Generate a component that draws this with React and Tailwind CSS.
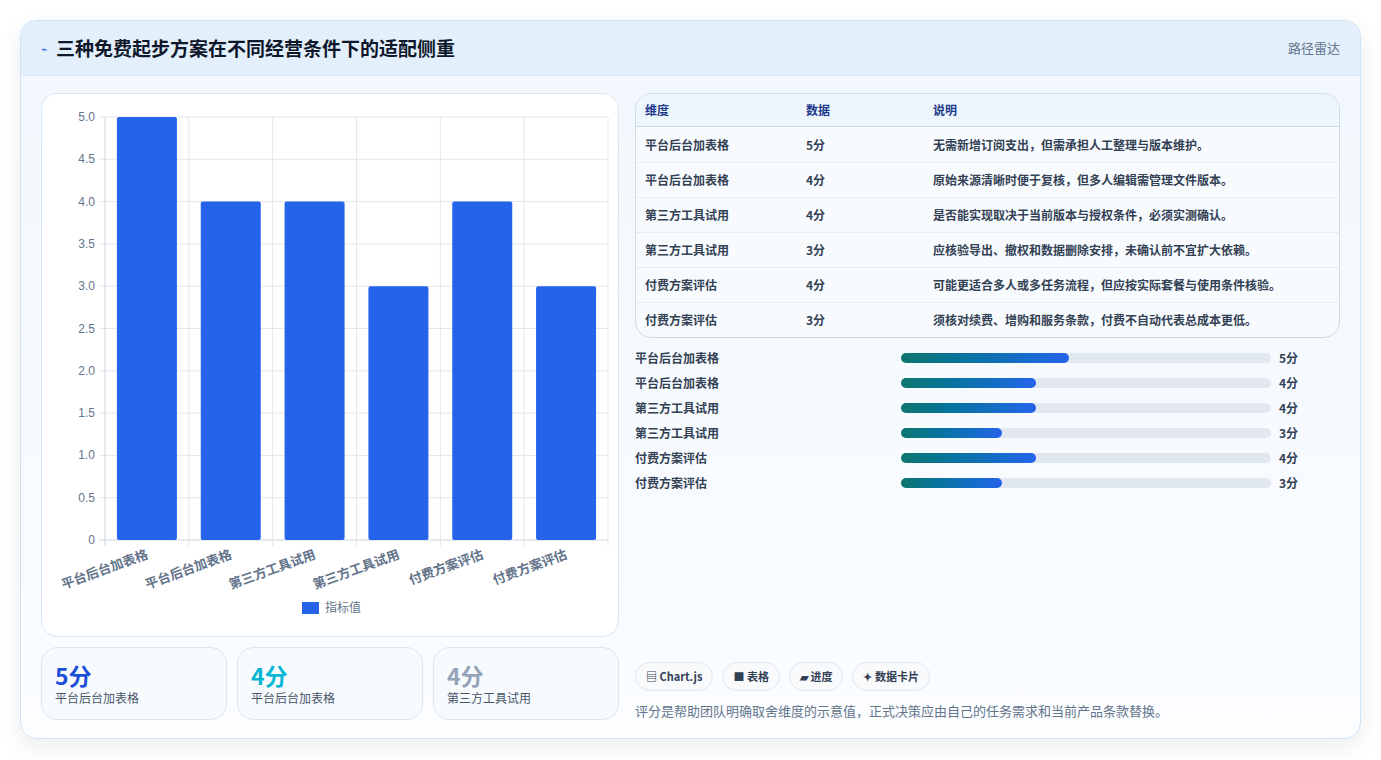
import React from "react";

const rows = [
  ["平台后台加表格", 5, "无需新增订阅支出，但需承担人工整理与版本维护。"],
  ["平台后台加表格", 4, "原始来源清晰时便于复核，但多人编辑需管理文件版本。"],
  ["第三方工具试用", 4, "是否能实现取决于当前版本与授权条件，必须实测确认。"],
  ["第三方工具试用", 3, "应核验导出、撤权和数据删除安排，未确认前不宜扩大依赖。"],
  ["付费方案评估", 4, "可能更适合多人或多任务流程，但应按实际套餐与使用条件核验。"],
  ["付费方案评估", 3, "须核对续费、增购和服务条款，付费不自动代表总成本更低。"],
];

function Chart() {
  const x0 = 63, x1 = 566, y0 = 23, y1 = 446;
  const cw = (x1 - x0) / 6;
  const yv = (v) => y1 - (v / 5) * (y1 - y0);
  const ticks = [0, 0.5, 1, 1.5, 2, 2.5, 3, 3.5, 4, 4.5, 5];
  return (
    <svg width="578" height="541" className="block" style={{ fontFamily: "'Liberation Sans','Noto Sans CJK SC',sans-serif" }}>
      {ticks.map((t) => (
        <g key={t}>
          <line x1={x0 - 6} x2={x1} y1={yv(t)} y2={yv(t)} stroke={t === 0 ? "#cbd5e1" : "#e5e7eb"} />
          <text x={x0 - 10} y={yv(t) + 4} textAnchor="end" fontSize="12" fill="#64748b">{t === 0 ? "0" : t.toFixed(1)}</text>
        </g>
      ))}
      {Array.from({ length: 7 }).map((_, i) => (
        <line key={i} x1={x0 + i * cw} x2={x0 + i * cw} y1={y0} y2={y1 + 6} stroke={i === 0 ? "#cbd5e1" : "#e5e7eb"} />
      ))}
      {rows.map((r, i) => {
        const cx = x0 + cw * i + cw / 2;
        return (
          <g key={i}>
            <rect x={cx - 30} y={yv(r[1])} width="60" height={y1 - yv(r[1])} fill="#2563eb" rx="2" />
            <text x={cx + 2} y={y1 + 18} textAnchor="end" fontSize="13" fontWeight="bold" fill="#64748b" transform={`rotate(-20 ${cx + 2} ${y1 + 18})`} style={{ fontFamily: "'Noto Sans CJK SC',sans-serif" }}>{r[0]}</text>
          </g>
        );
      })}
      <rect x="260" y="508" width="17" height="12" fill="#2563eb" />
      <text x="283" y="518" fontSize="12" fill="#64748b" style={{ fontFamily: "'Noto Sans CJK SC',sans-serif" }}>指标值</text>
    </svg>
  );
}

export default function App() {
  return (
    <div className="min-h-[760px] w-[1381px] bg-white p-5" style={{ fontFamily: "'Noto Sans CJK SC','Noto Sans',sans-serif" }}>
      <div className="overflow-hidden rounded-2xl border border-[#cfe3f5] bg-gradient-to-b from-[#f1f7fd] to-[#fbfdff] shadow-[0_8px_24px_rgba(15,23,42,0.08)]">
        <div className="flex h-[55px] items-center justify-between border-b border-[#d6e8f7] bg-[#e3f0fc] px-5">
          <div className="flex items-center gap-2">
            <span className="text-[11px] text-[#2563eb]">⌁</span>
            <span className="text-[19px] font-bold text-[#0f172a]">三种免费起步方案在不同经营条件下的适配侧重</span>
          </div>
          <span className="text-[13px] text-[#64748b]">路径雷达</span>
        </div>
        <div className="flex gap-4 px-5 pt-[17px] pb-[18px]">
          <div className="flex w-[578px] flex-col gap-[10px]">
            <div className="h-[544px] rounded-2xl border border-[#dbe7f3] bg-white"><Chart /></div>
            <div className="flex gap-[10px]">
              {[["5分", "text-[#1d4ed8]", "平台后台加表格"], ["4分", "text-[#06b6d4]", "平台后台加表格"], ["4分", "text-[#94a3b8]", "第三方工具试用"]].map((c, i) => (
                <div key={i} className="flex h-[73px] flex-1 flex-col justify-center rounded-2xl border border-[#dbe7f3] bg-[#f8fbfe] px-[13px]">
                  <div className={`text-[23px] font-bold leading-[28px] ${c[1]}`}>{c[0]}</div>
                  <div className="text-[12px] text-[#475569]">{c[2]}</div>
                </div>
              ))}
            </div>
          </div>
          <div className="flex flex-1 flex-col">
            <div className="overflow-hidden rounded-2xl border border-[#cfdbe8] bg-[#f8fbfe] text-[12px]">
              <div className="flex h-[33px] items-center border-b border-[#cfdbe8] bg-[#edf5fd] font-bold text-[#1e3a8a]">
                <div className="w-[170px] pl-[9px]">维度</div><div className="w-[127px]">数据</div><div>说明</div>
              </div>
              {rows.map((r, i) => (
                <div key={i} className={`flex h-[35px] items-center font-bold text-[#334155] ${i ? "border-t border-[#e5edf5]" : ""}`}>
                  <div className="w-[170px] pl-[9px]">{r[0]}</div><div className="w-[127px]">{r[1]}分</div><div>{r[2]}</div>
                </div>
              ))}
            </div>
            <div className="mt-[7px] flex flex-col">
              {rows.map((r, i) => (
                <div key={i} className="flex h-[25px] items-center text-[12px] font-bold text-[#334155]">
                  <div className="w-[266px]">{r[0]}</div>
                  <div className="h-[10px] w-[370px] rounded-full bg-[#e2e8f0]">
                    <div className="h-full rounded-full bg-gradient-to-r from-[#0f766e] to-[#2563eb]" style={{ width: `${(r[1] / 11) * 100}%` }} />
                  </div>
                  <div className="ml-2">{r[1]}分</div>
                </div>
              ))}
            </div>
            <div className="mt-auto flex gap-[9px]">
              {["▤ Chart.js", "■ 表格", "▰ 进度", "✦ 数据卡片"].map((t) => (
                <span key={t} className="rounded-full border border-[#e2e8f0] bg-[#f8fafc] px-[10px] py-[5px] text-[11px] font-bold text-[#334155]">{t}</span>
              ))}
            </div>
            <div className="mt-[10px] text-[13px] text-[#64748b]">评分是帮助团队明确取舍维度的示意值，正式决策应由自己的任务需求和当前产品条款替换。</div>
          </div>
        </div>
      </div>
    </div>
  );
}
